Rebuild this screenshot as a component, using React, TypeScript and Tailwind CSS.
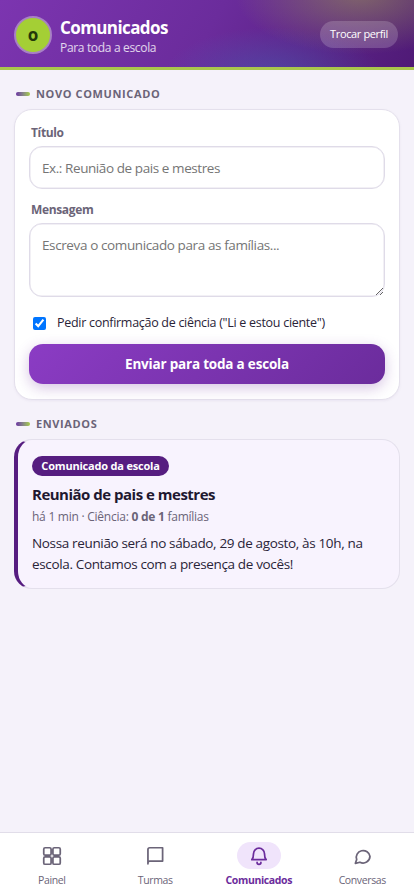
import type { ReactNode } from "react";

function SectionTitle({ children }: { children: ReactNode }) {
  return (
    <h2 className="ml-0.5 flex h-4 items-center gap-1.5 text-[11px] font-bold leading-4 tracking-[0.62px] text-[#6b6478]">
      <span
        className="h-1 w-3.5 rounded-full bg-linear-to-r from-[#6b2fa0] to-[#a6ce39]"
        aria-hidden="true"
      />
      {children}
    </h2>
  );
}

function Icon({ children }: { children: ReactNode }) {
  return (
    <svg
      viewBox="0 0 24 24"
      className="size-[22px]"
      fill="none"
      stroke="currentColor"
      strokeWidth="1.9"
      strokeLinecap="round"
      strokeLinejoin="round"
      aria-hidden="true"
    >
      {children}
    </svg>
  );
}

function Header() {
  return (
    <header className="flex h-[70px] shrink-0 items-center gap-2 border-b-[3px] border-[#a9c64c] bg-[radial-gradient(125px_60px_at_87%_-8%,rgba(178,190,70,0.42),transparent),radial-gradient(110px_50px_at_66%_115%,rgba(60,110,190,0.42),transparent),linear-gradient(120deg,#7c35b0_0%,#6b2c9c_50%,#4f1a76_100%)] pl-3.5 pr-4 text-white">
      <div className="mt-0.5 flex size-[38px] items-center justify-center rounded-full border-2 border-[#a880c5] bg-[#a4cf35] text-[17px] font-bold text-[#24380a]">
        o
      </div>
      <div className="mt-[7px] flex-1">
        <h1 className="text-[17px] font-bold leading-[21px] tracking-[-0.6px]">
          Comunicados
        </h1>
        <p className="text-xs leading-5 tracking-[-0.33px] text-white/80">
          Para toda a escola
        </p>
      </div>
      <button className="mt-0.5 h-[27px] w-[78px] rounded-full bg-white/18 text-[11px] tracking-[-0.37px]">
        Trocar perfil
      </button>
    </header>
  );
}

function AnnouncementForm() {
  return (
    <form className="mt-[7px] h-[291px] rounded-[18px] border border-[#e4e0ec] bg-white px-3.5 pt-3.5 shadow-[0_1px_3px_rgba(60,20,100,0.05)]">
      <label className="ml-0.5 block h-[22px] text-xs font-bold leading-[18px] tracking-[-0.35px] text-[#6b6478]">
        Título
      </label>
      <input
        className="block h-[43px] w-full rounded-[13px] border-[1.5px] border-[#dfdbe8] px-3 text-[13.5px] tracking-[-0.42px] shadow-[inset_0_0_0_0.5px_#e5e1eb] placeholder:text-[#757575]"
        placeholder="Ex.: Reunião de pais e mestres"
      />
      <label className="ml-0.5 mt-3 block h-[22px] text-xs font-bold leading-[18px] tracking-[-0.35px] text-[#6b6478]">
        Mensagem
      </label>
      <textarea
        className="block h-[74px] w-full resize-y rounded-[13px] border-[1.5px] border-[#dfdbe8] px-3 py-[11px] text-[13.5px] leading-5 tracking-[-0.39px] shadow-[inset_0_0_0_0.5px_#e5e1eb] placeholder:text-[#757575]"
        placeholder="Escreva o comunicado para as famílias..."
      />
      <label className="ml-1 mt-4 flex h-5 items-center gap-[11px] text-[12.5px] tracking-[-0.29px] text-[#2a2438]">
        <input type="checkbox" defaultChecked className="size-[13px]" />
        Pedir confirmação de ciência ("Li e estou ciente")
      </label>
      <button
        type="button"
        className="mt-[11px] block h-10 w-full rounded-[14px] bg-[linear-gradient(135deg,#8b3cc4,#6b2c9c)] pt-px text-[13.5px] font-bold tracking-[-0.2px] text-white shadow-[0_4px_14px_rgba(107,44,156,0.28)]"
      >
        Enviar para toda a escola
      </button>
    </form>
  );
}

function SentCard() {
  return (
    <article className="mt-[7px] h-[150px] rounded-[18px] border border-l-4 border-[#e4e0ec] border-l-[#561d80] bg-[#f8f3fe] pl-3.5 pr-3 pt-4 text-[#2a2438]">
      <span className="flex h-5 w-[137px] items-center justify-center rounded-full bg-[#561d80] pt-px text-[11px] font-bold tracking-[-0.2px] text-white">
        Comunicado da escola
      </span>
      <h3 className="mt-[7px] text-[15px] font-bold leading-[22px] tracking-[-0.5px] text-[#1f1830]">
        Reunião de pais e mestres
      </h3>
      <p className="mt-0.5 text-xs leading-5 tracking-[-0.25px] text-[#6b6478]">
        há 1 min · Ciência: <b className="font-bold">0 de 1</b> famílias
      </p>
      <p className="mt-1.5 text-[13.5px] leading-[21px] tracking-[-0.35px]">
        Nossa reunião será no sábado, 29 de agosto, às 10h, na
        <br />
        escola. Contamos com a presença de vocês!
      </p>
    </article>
  );
}

const TABS = [
  {
    label: "Painel",
    icon: (
      <>
        <rect x="3" y="3" width="8" height="8" rx="1.5" />
        <rect x="13" y="3" width="8" height="8" rx="1.5" />
        <rect x="3" y="13" width="8" height="8" rx="1.5" />
        <rect x="13" y="13" width="8" height="8" rx="1.5" />
      </>
    ),
  },
  {
    label: "Turmas",
    icon: <path d="M4.3 20.5V5a2 2 0 0 1 2-2h14v14.5h-14a2 2 0 0 0-2 2" />,
  },
  {
    label: "Comunicados",
    active: true,
    icon: (
      <>
        <path d="M6 9.5a6 6 0 0 1 12 0c0 3 .4 5 1.8 6.5H4.2C5.6 14.500 6 12.500 6 9.500z" />
        <path d="M9.900 19a2.100 2.100 0 0 0 4.200 0" />
      </>
    ),
  },
  {
    label: "Conversas",
    icon: (
      <path d="M20.700 12.400a7.500 7.300 0 0 1-11 6.400L4.800 20l1.400-4.200A7.500 7.300 0 1 1 20.700 12.400z" />
    ),
  },
];

function TabBar() {
  return (
    <nav className="grid h-16 shrink-0 grid-cols-4 border-t border-[#e1dde9] bg-white">
      {TABS.map((tab) => (
        <a
          key={tab.label}
          className={
            tab.active
              ? "flex flex-col items-center pt-[9px] text-[10.5px] font-bold leading-4 tracking-[-0.38px] text-[#6b2c9c]"
              : "flex flex-col items-center pt-[9px] text-[10.5px] leading-4 tracking-[-0.38px] text-[#6b6478]"
          }
        >
          <span
            className={
              tab.active
                ? "mb-[3px] flex h-[27px] w-11 items-center justify-center rounded-full bg-[#f0e4fb]"
                : "mb-[3px] flex h-[27px] w-11 items-center justify-center"
            }
          >
            <Icon>{tab.icon}</Icon>
          </span>
          {tab.label}
        </a>
      ))}
    </nav>
  );
}

export default function App() {
  return (
    <div className="flex h-[896px] w-[414px] flex-col overflow-hidden bg-[#f5f2fa] font-['Open_Sans','Noto_Sans',sans-serif]">
      <Header />
      <main className="flex-1 px-3.5 pt-4">
        <SectionTitle>NOVO COMUNICADO</SectionTitle>
        <AnnouncementForm />
        <div className="h-4" />
        <SectionTitle>ENVIADOS</SectionTitle>
        <SentCard />
      </main>
      <TabBar />
    </div>
  );
}
